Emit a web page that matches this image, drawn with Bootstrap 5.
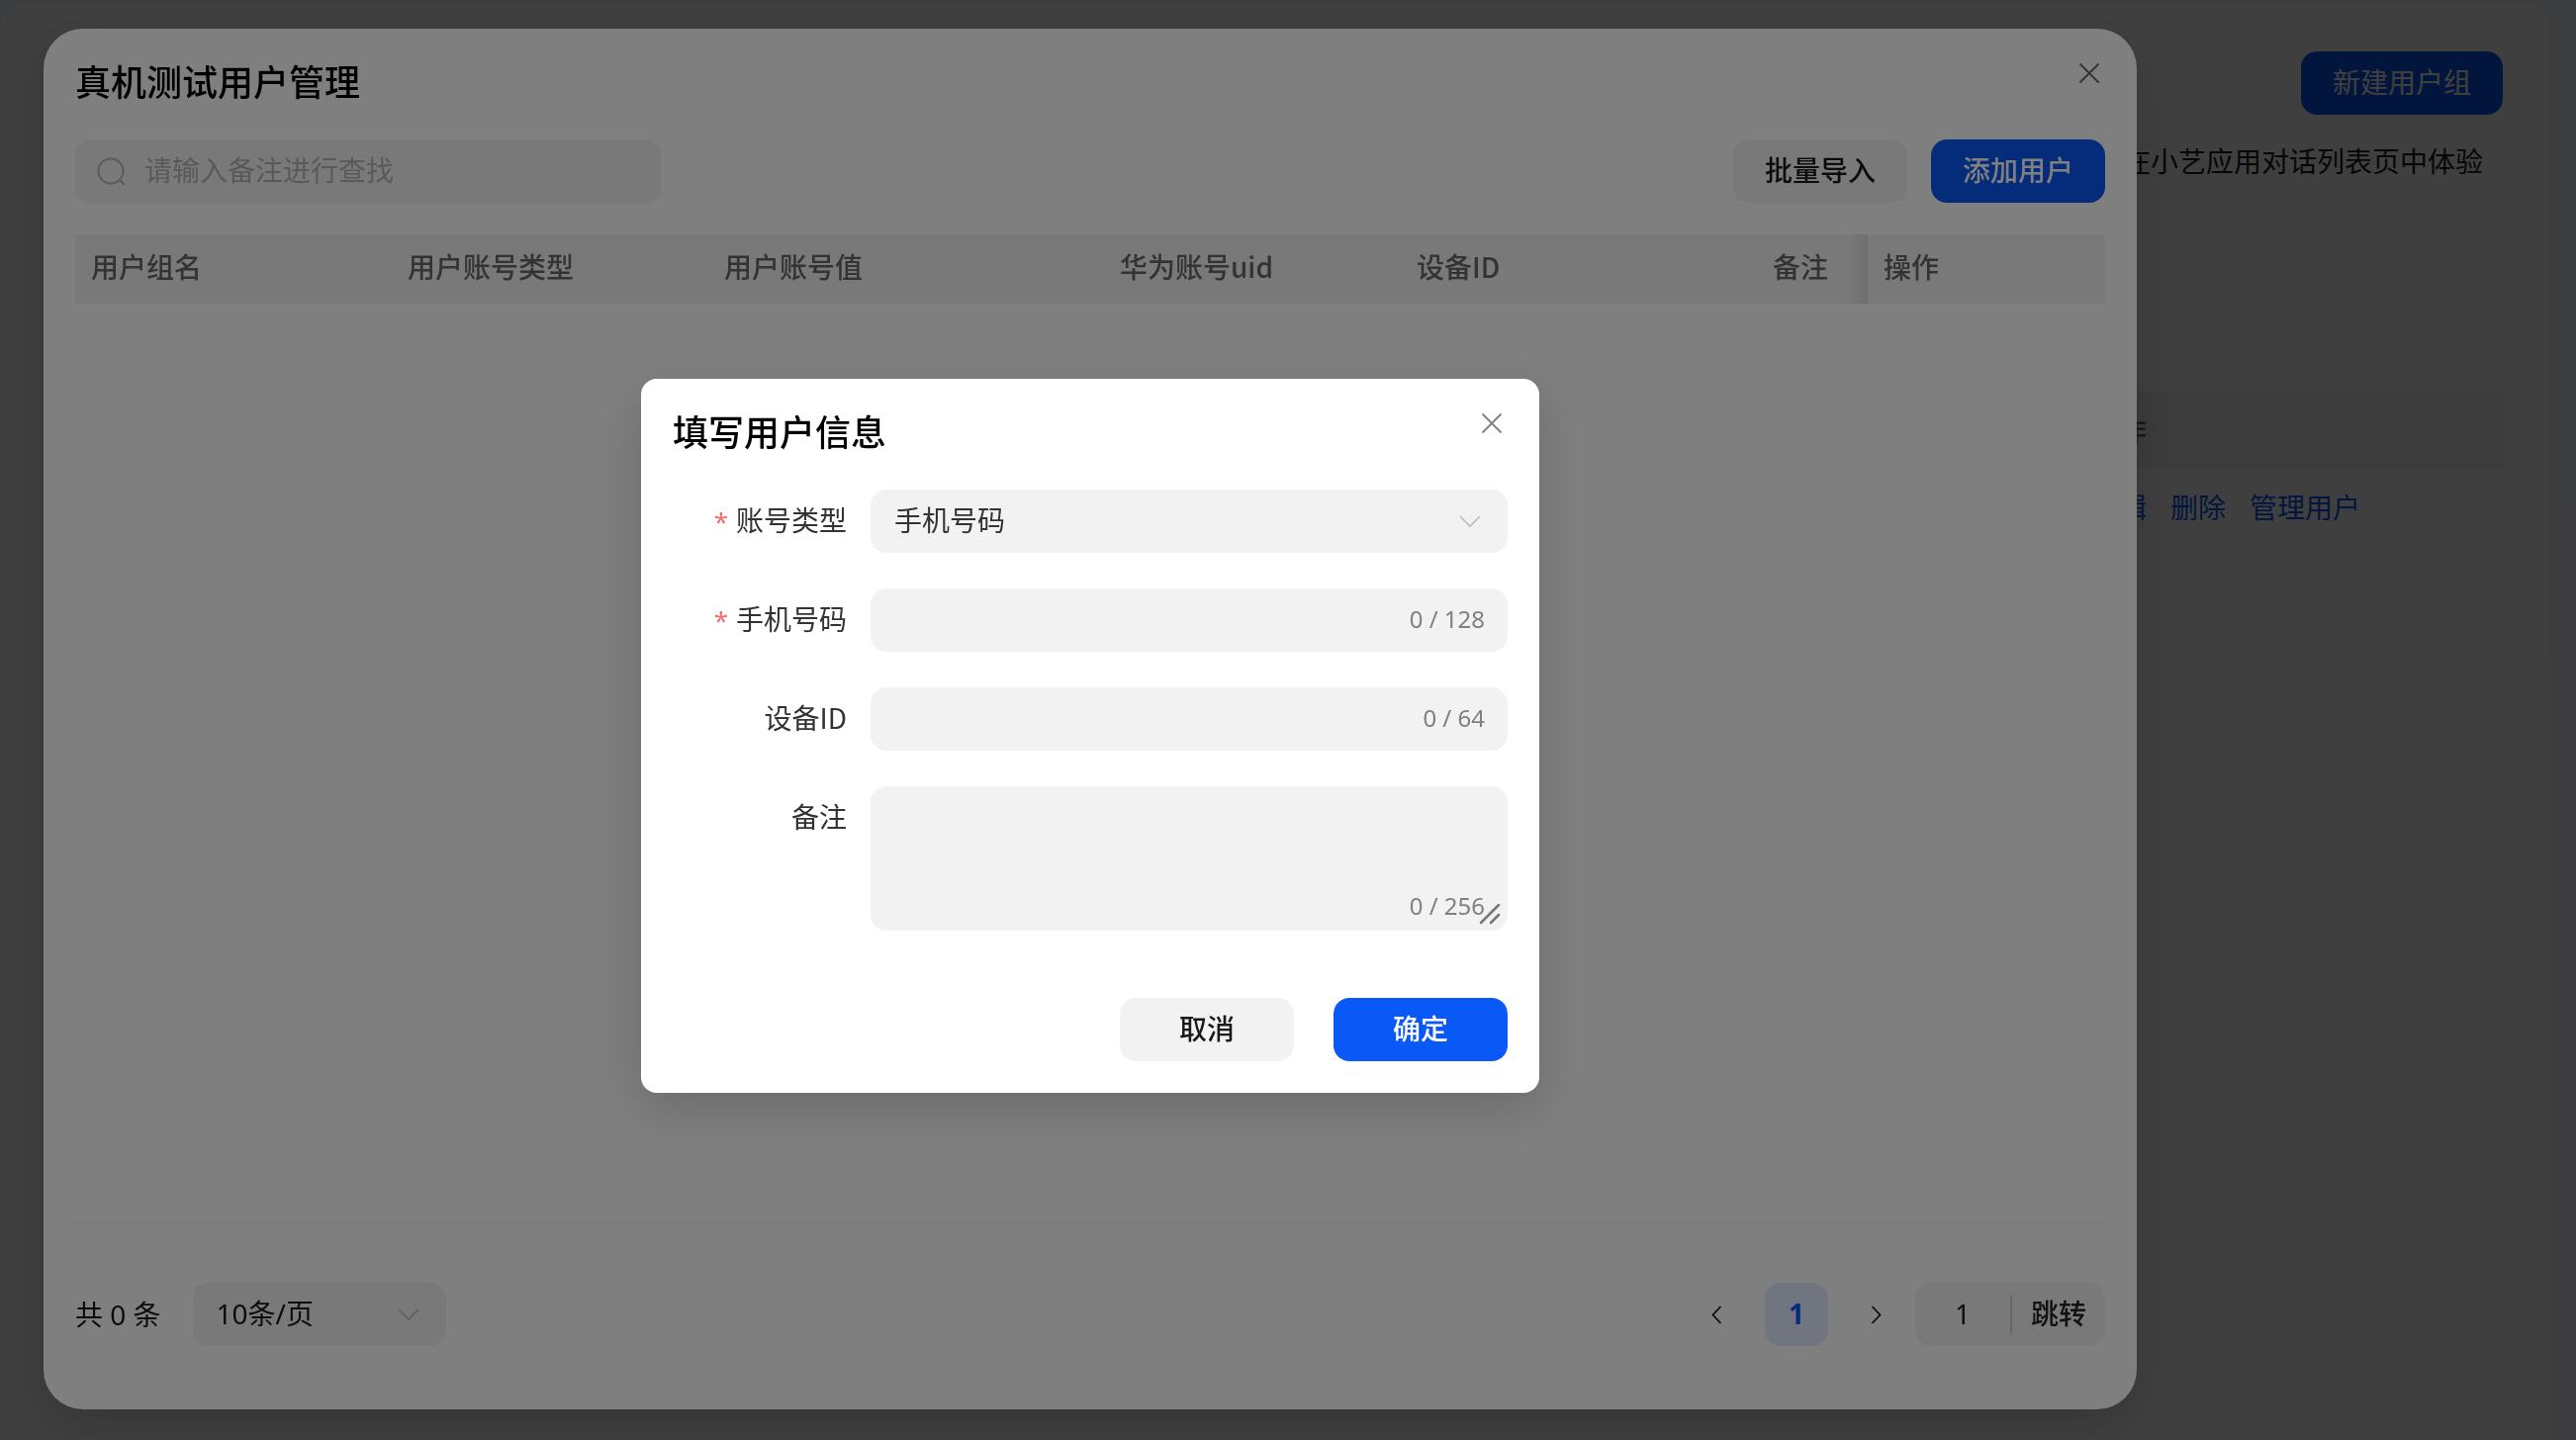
<!DOCTYPE html>
<html lang="zh-CN">
<head>
<meta charset="utf-8">
<meta name="viewport" content="width=device-width, initial-scale=1">
<title>真机测试用户管理</title>
<link href="https://cdn.jsdelivr.net/npm/bootstrap@5.3.0/dist/css/bootstrap.min.css" rel="stylesheet">
<style>
  :root { --brand: #0a59f7; --field: #f2f2f2; --ink: #333; --cjk: "Noto Sans CJK SC", sans-serif; }
  body { font-family: "Noto Sans", "Noto Sans CJK SC", sans-serif; font-size: 28px; line-height: 40px; color: #191919; background: linear-gradient(#eef4fb, #f3f2f8); overflow: hidden; }
  .page-shell { min-height: 100vh; padding: 4px 26px 0 0; }
  .page-panel { min-height: calc(100vh - 4px); background: #fff; border-radius: 24px 24px 0 0; padding: 48px 48px 0; }
  .btn { --bs-btn-font-size: 28px; --bs-btn-line-height: 40px; --bs-btn-padding-x: 32px; --bs-btn-border-width: 0; --bs-btn-border-radius: 16px; padding-top: 11px; padding-bottom: 13px; }
  .btn-primary { --bs-btn-bg: var(--brand); }
  .btn-soft { --bs-btn-bg: var(--field); --bs-btn-color: #191919; --bs-btn-hover-bg: #e6e6e6; }
  .btn-medium { font-weight: 500; }
  .btn-plain { --bs-btn-padding-x: 0; padding-top: 0; padding-bottom: 0; line-height: 0; }
  .back-tip { padding: 27px 20px 1px 0; text-align: right; }
  .back-head { margin-top: 212px; background: var(--field); height: 78px; color: #666; font-weight: 500; }
  .back-row { height: 78px; }
  .back-cell { width: 440px; padding-left: 24px; }
  .back-cell a { color: var(--brand); text-decoration: none; }
  .shade { position: fixed; inset: 0; background: rgba(0,0,0,.5); }
  .layer { position: fixed; inset: 0; display: flex; }
  .layer-main { padding: 29px 444px 31px 44px; }
  .sheet { flex: 1; background: #fff; border-radius: 40px; padding: 32px 32px 64px; box-shadow: 0 16px 48px rgba(0,0,0,.16); }
  .dlg-title { font-size: 36px; line-height: 46px; font-weight: 500; color: #000; margin: 0 0 2px; }
  .field { --bs-border-width: 0; background-color: var(--field); border: 0; border-radius: 16px; font-size: 28px; line-height: 40px; padding: 11px 24px 13px; color: var(--ink); height: 64px; }
  .field:focus { background-color: var(--field); }
  .field::placeholder { color: #b3b3b3; }
  .search-box { width: 592px; }
  .search-box .field { padding-left: 70px; }
  .search-icon { position: absolute; left: 20px; top: 16px; pointer-events: none; }
  .grid-head { margin: 32px 0 0; table-layout: fixed; }
  .grid-head th { font-family: var(--cjk); background: var(--field); color: #666; font-weight: 500; padding: 12px 16px 18px; border: 0; }
  .grid-head .before-fixed { background: linear-gradient(to right, rgba(0,0,0,0) 92px, rgba(0,0,0,.08)) var(--field); }
  .pager { border-top: 2px solid #f3f3f3; padding-top: 60px; }
  .page-size { width: 256px; }
  .page-size .field { color: #191919; }
  select.field { background: var(--field) url("data:image/svg+xml,%3Csvg xmlns='http://www.w3.org/2000/svg' viewBox='0 0 24 24'%3E%3Cpath d='M2 7l10 10L22 7' fill='none' stroke='%23bbb' stroke-width='1.6'/%3E%3C/svg%3E") no-repeat right 26px center / 24px 24px; }
  .page-now { width: 64px; height: 64px; --bs-btn-padding-x: 0; --bs-btn-bg: #e1eaff; --bs-btn-color: var(--brand); font-weight: 700; }
  .page-step { width: 64px; height: 64px; }
  .jump-box { width: 192px; background: var(--field); border-radius: 16px; }
  .jump-box input { width: 96px; height: 64px; border: 0; background: none; text-align: center; color: #191919; padding: 0 0 2px; }
  .jump-rule { width: 2px; height: 40px; background: #d0d0d0; }
  .jump-go { height: 64px; }
  .layer-form { align-items: flex-start; justify-content: flex-start; padding: 383px 0 0 648px; }
  .form-sheet { width: 908px; background: #fff; border-radius: 16px; padding: 32px; box-shadow: 0 16px 48px rgba(0,0,0,.16); }
  .form-line { margin-bottom: 36px; }
  .form-name { font-family: var(--cjk); width: 200px; padding: 10px 24px 0 0; text-align: right; color: var(--ink); }
  .must { font-family: "Noto Sans", sans-serif; font-size: 26px; line-height: 1; color: #f56c6c; margin-right: 8px; }
  .counter { position: absolute; right: 23px; top: 11px; font-size: 24px; color: #808080; }
  .counter-low { top: auto; bottom: 5px; }
  textarea.field { height: 146px; resize: none; display: block; }
  .grip { position: absolute; right: 7px; bottom: 6px; }
  .form-foot { margin-top: 68px; gap: 40px; }
  .btn-wide { width: 176px; }
</style>
</head>
<body>
<main class="page-shell">
  <div class="page-panel">
    <div class="d-flex justify-content-end"><button class="btn btn-primary" type="button">新建用户组</button></div>
    <div class="back-tip">在小艺应用对话列表页中体验</div>
    <div class="back-head d-flex justify-content-end align-items-center"><div class="back-cell">操作</div></div>
    <div class="back-row d-flex justify-content-end align-items-center"><div class="back-cell d-flex gap-4"><a href="#">编辑</a><a href="#">删除</a><a href="#">管理用户</a></div></div>
  </div>
</main>
<div class="shade"></div>
<div class="layer layer-main">
  <section class="sheet d-flex flex-column" aria-label="真机测试用户管理">
    <div class="d-flex justify-content-between align-items-start">
      <h1 class="dlg-title">真机测试用户管理</h1>
      <button class="btn btn-plain" type="button" aria-label="关闭"><svg width="32" height="28" viewBox="0 0 32 28"><path d="M6.500 3.500l19 19M25.500 3.500l-19 19" stroke="#666" stroke-width="1.800" fill="none"/></svg></button>
    </div>
    <div class="d-flex justify-content-between mt-4 pt-2">
      <div class="search-box position-relative">
        <svg class="search-icon" width="32" height="32" viewBox="0 0 32 32" fill="none" stroke="#b3b3b3" stroke-width="2"><circle cx="16" cy="16" r="12.500"/><path d="M24.500 24.500l5 5"/></svg>
        <input class="form-control field" type="text" placeholder="请输入备注进行查找" aria-label="请输入备注进行查找">
      </div>
      <div class="d-flex gap-4">
        <button class="btn btn-soft btn-medium" type="button">批量导入</button>
        <button class="btn btn-primary btn-medium" type="button">添加用户</button>
      </div>
    </div>
    <table class="table grid-head">
      <colgroup><col style="width:320px"><col style="width:320px"><col style="width:400px"><col style="width:300px"><col><col style="width:112px"><col style="width:240px"></colgroup>
      <thead><tr><th>用户组名</th><th>用户账号类型</th><th>用户账号值</th><th>华为账号uid</th><th>设备ID</th><th class="before-fixed">备注</th><th>操作</th></tr></thead>
    </table>
    <div class="pager d-flex align-items-center mt-auto">
      <label for="page-size" class="me-4 pe-2">共 0 条</label>
      <div class="page-size"><select id="page-size" class="form-select field"><option>10条/页</option></select></div>
      <div class="d-flex align-items-center ms-auto">
        <div class="d-flex align-items-center gap-3 me-2">
          <button class="btn btn-plain page-step" type="button" aria-label="上一页"><svg width="24" height="24" viewBox="0 0 24 24"><path d="M15.500 4l-8 8.500 8 8.500" stroke="#191919" stroke-width="1.800" fill="none"/></svg></button>
          <button class="btn page-now" type="button">1</button>
          <button class="btn btn-plain page-step" type="button" aria-label="下一页"><svg width="24" height="24" viewBox="0 0 24 24"><path d="M8.500 4l8 8.500-8 8.500" stroke="#191919" stroke-width="1.800" fill="none"/></svg></button>
        </div>
        <div class="jump-box d-flex align-items-center">
          <input type="text" value="1" aria-label="页码"><span class="jump-rule"></span>
          <button class="btn btn-medium jump-go flex-fill px-0" type="button">跳转</button>
        </div>
      </div>
    </div>
  </section>
</div>
<div class="shade"></div>
<div class="layer layer-form">
  <form class="form-sheet" aria-label="填写用户信息">
    <div class="d-flex justify-content-between align-items-start mb-4 pb-2">
      <h2 class="dlg-title">填写用户信息</h2>
      <button class="btn btn-plain" type="button" aria-label="关闭"><svg width="32" height="28" viewBox="0 0 32 28"><path d="M6.500 3.500l19 19M25.500 3.500l-19 19" stroke="#808080" stroke-width="1.800" fill="none"/></svg></button>
    </div>
    <div class="d-flex form-line"><label class="form-name" for="kind"><span class="must">*</span>账号类型</label><div class="flex-fill"><select id="kind" class="form-select field"><option>手机号码</option></select></div></div>
    <div class="d-flex form-line"><label class="form-name" for="phone"><span class="must">*</span>手机号码</label><div class="flex-fill position-relative"><input id="phone" class="form-control field" type="text"><span class="counter">0 / 128</span></div></div>
    <div class="d-flex form-line"><label class="form-name" for="device">设备ID</label><div class="flex-fill position-relative"><input id="device" class="form-control field" type="text"><span class="counter">0 / 64</span></div></div>
    <div class="d-flex"><label class="form-name" for="note">备注</label><div class="flex-fill position-relative"><textarea id="note" class="form-control field"></textarea><span class="counter counter-low">0 / 256</span>
      <svg class="grip" width="22" height="22" viewBox="0 0 22 22"><path d="M2 20L20 2M12 20l8-8" stroke="#777" stroke-width="2.500" stroke-linecap="round"/></svg></div></div>
    <div class="d-flex justify-content-end form-foot">
      <button class="btn btn-soft btn-medium btn-wide" type="button">取消</button>
      <button class="btn btn-primary btn-medium btn-wide" type="button">确定</button>
    </div>
  </form>
</div>
<script src="https://cdn.jsdelivr.net/npm/bootstrap@5.3.0/dist/js/bootstrap.bundle.min.js"></script>
</body>
</html>
